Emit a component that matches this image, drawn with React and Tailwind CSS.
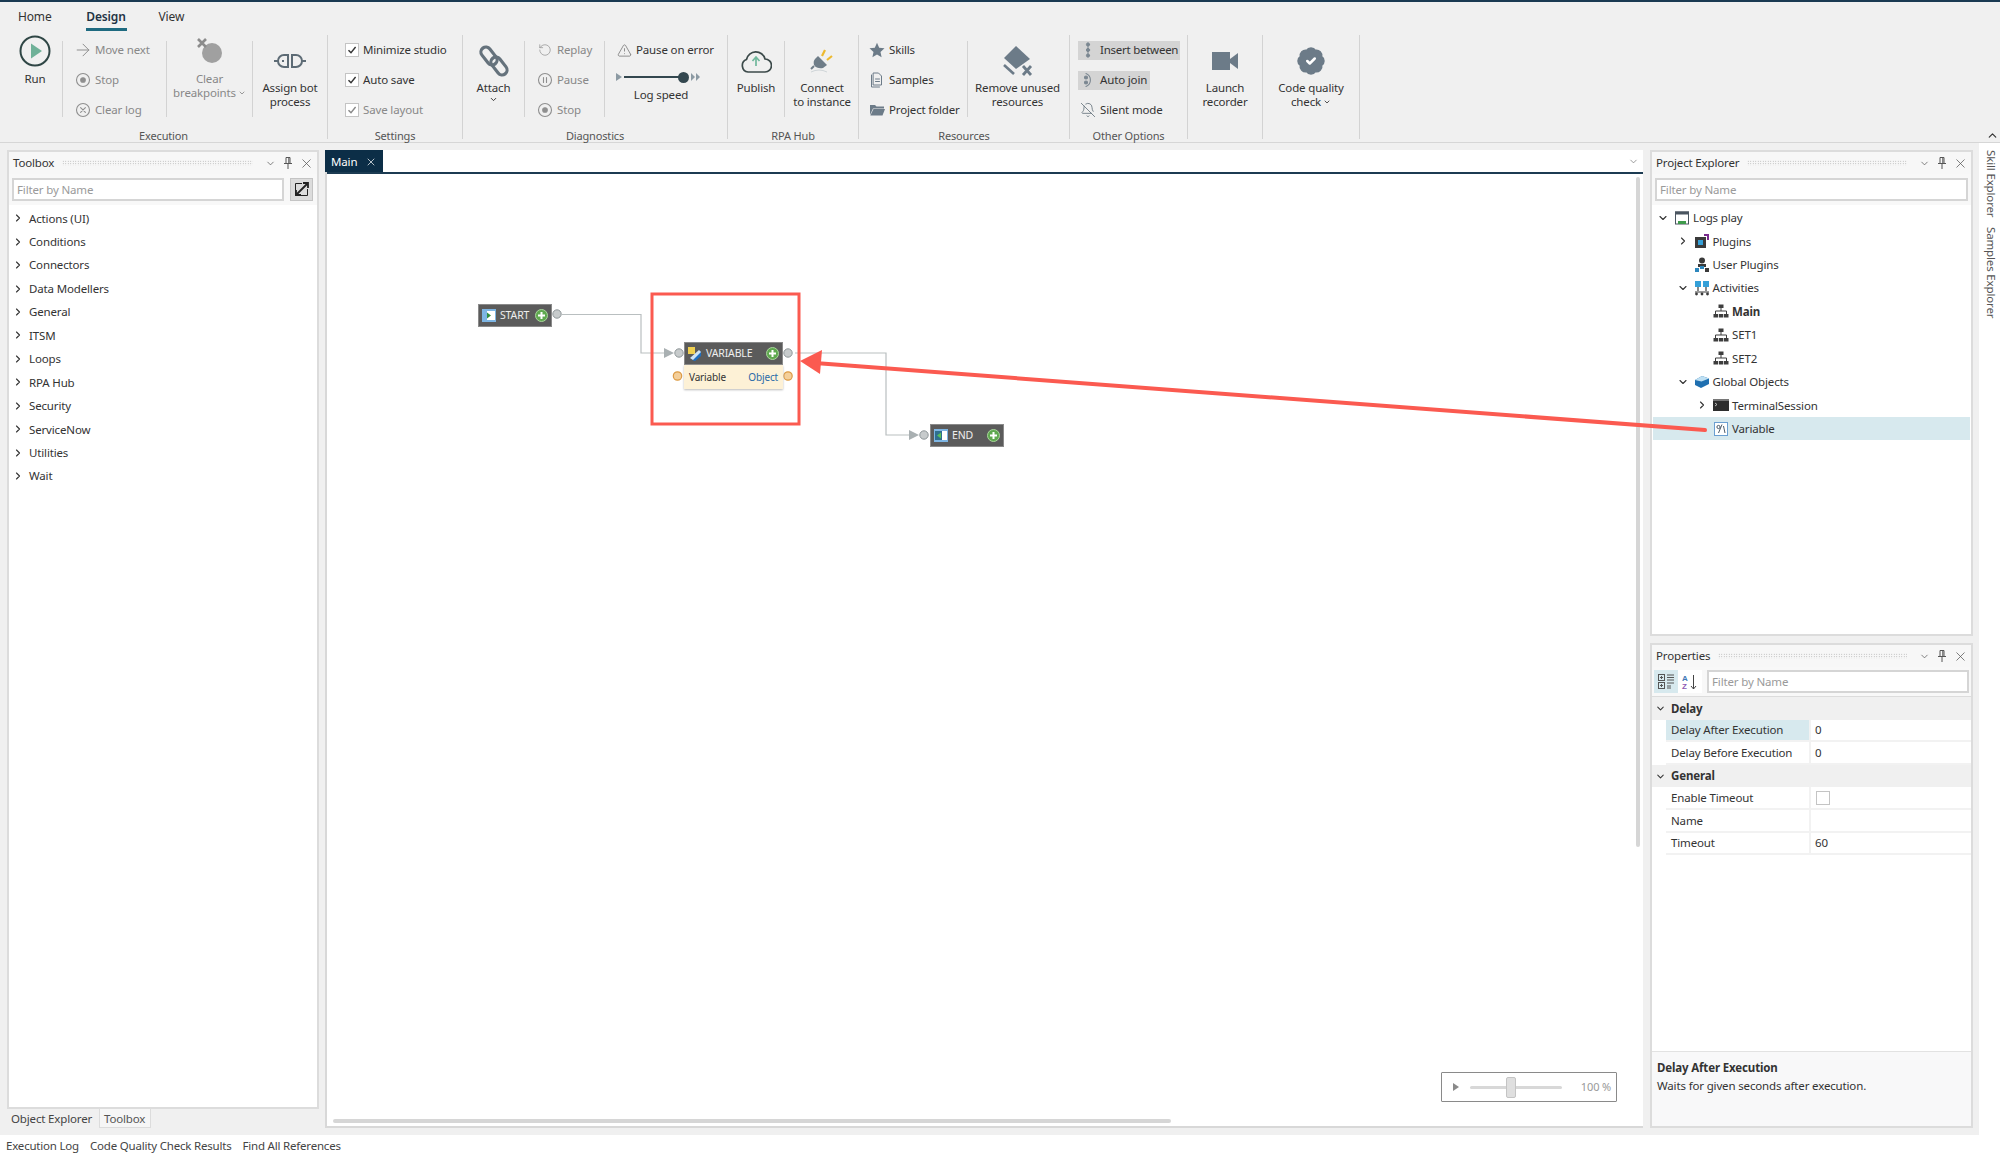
import React from 'react';
import { ArrowRight, ChevronDown, ChevronRight, ChevronUp, X, TriangleAlert, BellOff, RotateCcw, BadgeCheck } from 'lucide-react';

const Stroke = ({ s = 16, children, c = 'currentColor', w = 1.4 }) => (
  <svg width={s} height={s} viewBox="0 0 16 16" fill="none" stroke={c} strokeWidth={w} strokeLinecap="round" strokeLinejoin="round">
    {children}
  </svg>
);

// ribbon icons
const RunIcon = () => (
  <svg width="32" height="32" viewBox="0 0 32 32">
    <circle cx="16" cy="16" r="14.5" fill="none" stroke="#2f4645" strokeWidth="2" />
    <path d="M12 8.5 L23 16 L12 23.5 Z" fill="#6fb198" />
  </svg>
);
const StopIcon = () => (
  <Stroke c="#8f8f8f" w="1.1"><circle cx="8" cy="8" r="6.5" /><circle cx="8" cy="8" r="2.3" fill="#8f8f8f" /></Stroke>
);
const ClearIcon = () => (
  <Stroke c="#8f8f8f" w="1.1"><circle cx="8" cy="8" r="6.5" /><path d="M5.6 5.6l4.8 4.8M10.4 5.6l-4.8 4.8" /></Stroke>
);
const PauseIcon = () => (
  <Stroke c="#8f8f8f" w="1.1"><circle cx="8" cy="8" r="6.5" /><path d="M6.5 5.5v5M9.5 5.5v5" /></Stroke>
);
const BreakIcon = () => (
  <svg width="30" height="26" viewBox="0 0 30 26">
    <circle cx="17" cy="15" r="10" fill="#a0a0a0" />
    <path d="M3 1 L11 9 M11 1 L3 9" stroke="#8c8c8c" strokeWidth="2.6" />
  </svg>
);
const AssignIcon = () => (
  <svg width="32" height="16" viewBox="0 0 32 16" fill="none" stroke="#5d6b75" strokeWidth="2">
    <path d="M14 2 H10 A6 6 0 0 0 10 14 H14 Z" />
    <path d="M18 2 H22 A6 6 0 0 1 22 14 H18 Z" />
    <path d="M0 8 H4 M28 8 H32 M8 8h2" />
  </svg>
);
const AttachIcon = () => (
  <svg width="32" height="32" viewBox="0 0 32 32" fill="none" stroke="#65727c" strokeWidth="3.2">
    <rect x="1" y="6" width="20" height="10" rx="5" transform="rotate(52 11 11)" />
    <rect x="11" y="16" width="20" height="10" rx="5" transform="rotate(52 21 21)" />
  </svg>
);
const PublishIcon = () => (
  <svg width="32" height="26" viewBox="0 0 32 26" fill="none">
    <path d="M8 24 A6.5 6.5 0 0 1 6.5 11.5 A9.5 9.5 0 0 1 25 11 A6.5 6.5 0 0 1 25 24 Z" stroke="#3c4a4a" strokeWidth="1.7" />
    <path d="M16 18 V10 M12.5 13 L16 9 L19.5 13" stroke="#70b89c" strokeWidth="1.7" />
  </svg>
);
const ConnectIcon = () => (
  <svg width="26" height="26" viewBox="0 0 26 26">
    <path d="M9 8 L18 17 L14 20 Q8 21 5 17 Q4 13 6 11 Z" fill="#6f7d88" />
    <path d="M5 18 L2 21" stroke="#6f7d88" strokeWidth="2" />
    <path d="M13 8 L16 2 M18 12 L23 8" stroke="#edb92e" strokeWidth="2.2" />
    <path d="M2 24 Q10 20 18 24" stroke="#cfd5d8" strokeWidth="1" fill="none" />
  </svg>
);
const StarIcon = () => (
  <svg width="16" height="16" viewBox="0 0 16 16"><path d="M8 .8l2.2 4.9 5.3.6-4 3.6 1.1 5.3L8 12.5l-4.6 2.7 1.1-5.3-4-3.6 5.3-.6z" fill="#6c7b88" /></svg>
);
const SamplesIcon = () => (
  <Stroke c="#6c7b88" w="1"><path d="M4.5 1h5l3 3v9h-8z" /><path d="M2.5 3v12h8" /><path d="M6.5 7h4M6.5 9.5h4" /></Stroke>
);
const FolderIcon = () => (
  <svg width="16" height="16" viewBox="0 0 16 16"><path d="M1 3h5l1.5 1.5H15v2H4L1 13z" fill="#6c7b88" /><path d="M4.5 7H16l-2.5 6.5H1.3z" fill="#6c7b88" /></svg>
);
const RemoveIcon = () => (
  <svg width="32" height="32" viewBox="0 0 32 32">
    <path d="M14 1 L28 14 L14 24 L2 13 Z" fill="#6c7b88" />
    <path d="M2 20 L12 29" stroke="#6c7b88" strokeWidth="2.6" />
    <path d="M21 21 L29 30 M29 21 L21 30" stroke="#6c7b88" strokeWidth="2.8" />
  </svg>
);
const InsertIcon = () => (
  <Stroke c="#7b8791" w="1"><path d="M8 1v14" /><circle cx="8" cy="2.5" r="1.6" fill="#7b8791" /><circle cx="8" cy="8" r="1.6" fill="#7b8791" /><circle cx="8" cy="13.5" r="1.6" fill="#7b8791" /></Stroke>
);
const JoinIcon = () => (
  <Stroke c="#7b8791" w="1.1"><path d="M6 1.5 A7 7 0 0 1 6 14.5" /><circle cx="6" cy="5.5" r="1.5" fill="#7b8791" /><circle cx="6" cy="10.5" r="1.5" fill="#7b8791" /></Stroke>
);
const VideoIcon = () => (
  <svg width="26" height="18" viewBox="0 0 26 18"><rect width="18" height="18" fill="#6c7b88" /><path d="M18 7 L26 1 V17 L18 11 Z" fill="#6c7b88" /></svg>
);
const MiniSlider = () => (
  <div className="flex items-center h-[30px] pl-[13px]">
    <svg width="7" height="8" viewBox="0 0 7 8"><path d="M0 0l6 4-6 4z" fill="#8c9aa3" /></svg>
    <div className="w-[59px] h-[2px] bg-[#33474f] ml-[1px]" />
    <div className="w-[11px] h-[11px] rounded-full bg-[#33474f] -ml-[5px]" />
    <svg className="ml-[2px]" width="10" height="8" viewBox="0 0 10 8"><path d="M0 0l4 4-4 4zM5 0l4 4-4 4z" fill="#8c9aa3" /></svg>
  </div>
);

// tree icons
const Box = ({ children }) => <svg width="16" height="16" viewBox="0 0 16 16">{children}</svg>;
const ProjectIco = () => (
  <Box><rect x="1.5" y="2" width="13" height="12" fill="#fff" stroke="#4a5560" /><rect x="1" y="1.5" width="14" height="3" fill="#4a5560" /><rect x="4" y="11" width="8" height="3" fill="#3f9b4c" /></Box>
);
const PluginIco = () => (
  <Box><rect x="1" y="4" width="11" height="11" fill="#3a3a3a" /><rect x="4" y="7" width="5" height="5" fill="#35a0d8" /><path d="M10 1h5v6h-2V3h-3z" fill="#7a2b8e" /></Box>
);
const UserIco = () => (
  <Box><circle cx="8" cy="3.5" r="3" fill="#3a3a3a" /><rect x="4" y="7" width="8" height="3" fill="#3a3a3a" /><rect x="1" y="11" width="4" height="4" fill="#2d87bd" /><rect x="6" y="9" width="4" height="3" fill="#2d87bd" /><rect x="11" y="11" width="4" height="4" fill="#3a3a3a" /></Box>
);
const ActivitiesIco = () => (
  <Box><rect x="1" y="1" width="6" height="6" fill="#35a0d8" /><rect x="9" y="1" width="6" height="6" fill="#35a0d8" /><path d="M4 7v4M12 7v4M1 12h14" stroke="#3a3a3a" strokeWidth="1.2" /><circle cx="2.5" cy="14" r="1.4" fill="#3a3a3a" /><circle cx="8" cy="14" r="1.4" fill="#3a3a3a" /><circle cx="13.5" cy="14" r="1.4" fill="#3a3a3a" /></Box>
);
const FlowIco = () => (
  <Box><rect x="5.5" y="1.5" width="5" height="3.5" fill="#3e3e3e" /><path d="M8 5v3M2.5 11V8h11v3" stroke="#3e3e3e" fill="none" /><rect x="0.5" y="11" width="4.5" height="3.5" fill="#3e3e3e" /><rect x="5.8" y="11" width="4.5" height="3.5" fill="#3e3e3e" /><rect x="11" y="11" width="4.5" height="3.5" fill="#3e3e3e" /></Box>
);
const GlobalIco = () => (
  <Box><path d="M8 2 L15 4.5 V10 L7 14 L1 11 V6 Z" fill="#1f6fb0" /><path d="M8 2 L15 4.5 L7.5 7.5 L1 6 Z" fill="#bfe0f3" /></Box>
);
const TerminalIco = () => (
  <Box><rect y="2" width="16" height="12" fill="#2e2e2e" /><rect y="2" width="16" height="2" fill="#777" /><path d="M2 6l2 1.5L2 9" stroke="#ddd" fill="none" strokeWidth=".8" /></Box>
);
const VarIco = () => (
  <Box><rect x="1.5" y="1.5" width="13" height="13" fill="#fff" stroke="#6b9fd1" /><circle cx="5.5" cy="6" r="1.6" fill="none" stroke="#3a4a58" strokeWidth=".9" /><path d="M9 3.5 L5.5 12 M10.5 5 L12 12" stroke="#3a4a58" strokeWidth=".9" /></Box>
);

const Row = ({ icon, children, gray, pl = 'pl-0', gap = 'ml-[4px]' }) => (
  <div className={`flex items-center h-[30px] ${pl} ${gray ? 'text-[#888]' : 'text-[#333]'}`}>
    <div className="w-4 h-4 flex items-center justify-center shrink-0">{icon}</div>
    <span className={`${gap} whitespace-nowrap`}>{children}</span>
  </div>
);

const Large = ({ w, icon, lines, gray, iconH = 'h-[46px] pt-[6px]' }) => (
  <div className={`${w} shrink-0 flex flex-col items-center leading-[14px] ${gray ? 'text-[#888]' : 'text-[#333]'}`}>
    <div className={`${iconH} w-full flex items-center justify-center shrink-0`}>{icon}</div>
    {lines.map((l, i) => <div key={i} className="whitespace-nowrap flex items-center">{l}</div>)}
  </div>
);

const Sep = () => <div className="w-px h-[76px] mt-[6px] bg-[#d3d3d3] shrink-0" />;

const Check = ({ label, gray }) => (
  <div className={`flex items-center h-[30px] ${gray ? 'text-[#888]' : 'text-[#333]'}`}>
    <div className={`w-[14px] h-[14px] bg-white border border-[#c4c4c4] flex items-center justify-center ${gray ? 'bg-[#f0f0f0]' : ''}`}>
      <svg width="10" height="10" viewBox="0 0 10 10" fill="none" stroke={gray ? '#888' : '#333'} strokeWidth="1.4"><path d="M1.5 5.2 L4 7.8 L8.6 2" /></svg>
    </div>
    <span className="ml-[4px] whitespace-nowrap">{label}</span>
  </div>
);

const Group = ({ w, label, children }) => (
  <div className={`${w} h-[104px] shrink-0 border-r border-[#d3d3d3] flex flex-col`}>
    <div className="h-[94px] shrink-0 flex items-start">{children}</div>
    <div className="h-[14px] shrink-0 leading-[14px] text-center text-[#555] text-[11px]">{label}</div>
  </div>
);

const Caret = () => <ChevronDown size={8} strokeWidth={2.5} className="ml-[2px]" />;

const Ribbon = () => (
  <div className="h-[143px] bg-[#f0f0f0] border-b border-[#d6d6d6] border-t-2 border-t-[#1a3a52] shrink-0 relative">
    <div className="h-[33px] flex text-[#333] text-[12px]">
      <div className="ml-[18px] mt-[8px] leading-[14px]">Home</div>
      <div className="ml-[34px] mt-[8px] h-[21px] w-[41px] leading-[14px] border-b-[3px] border-[#1e6a80] font-semibold text-[#1f3344] text-center">Design</div>
      <div className="ml-[32px] mt-[8px] leading-[14px]">View</div>
    </div>
    <div className="flex items-start">
      <Group w="w-[328px]" label="Execution">
        <Large w="w-[62px] pl-[8px]" iconH="h-[37px]" icon={<div className="-mt-[5px]"><RunIcon /></div>} lines={['Run']} />
        <Sep />
        <div className="w-[104px] pl-[12px]">
          <Row gray icon={<ArrowRight size={20} strokeWidth={1.2} color="#8f8f8f" className="shrink-0" />}>Move next</Row>
          <Row gray icon={<StopIcon />}>Stop</Row>
          <Row gray icon={<ClearIcon />}>Clear log</Row>
        </div>
        <Sep />
        <Large w="w-[85px]" gray iconH="h-[37px]" icon={<div className="-mt-[6px]"><BreakIcon /></div>} lines={['Clear', <>breakpoints<Caret /></>]} />
        <Sep />
        <Large w="w-[74px]" icon={<AssignIcon />} lines={['Assign bot', 'process']} />
      </Group>
      <Group w="w-[135px]" label="Settings">
        <div className="pl-[17px]">
          <Check label="Minimize studio" />
          <Check label="Auto save" />
          <Check gray label="Save layout" />
        </div>
      </Group>
      <Group w="w-[265px]" label="Diagnostics">
        <Large w="w-[61px]" icon={<AttachIcon />} lines={['Attach', <ChevronDown key="c" size={9} strokeWidth={2.5} />]} />
        <Sep />
        <div className="w-[79px] pl-[12px]">
          <Row gray icon={<RotateCcw size={14} strokeWidth={1.2} color="#8f8f8f" />}>Replay</Row>
          <Row gray icon={<PauseIcon />}>Pause</Row>
          <Row gray icon={<StopIcon />}>Stop</Row>
        </div>
        <Sep />
        <div className="w-[122px] pl-[11px]">
          <Row icon={<TriangleAlert size={15} strokeWidth={1} color="#555" />}>Pause on error</Row>
          <div className="-ml-[13px] -mt-[3px]"><MiniSlider /></div>
          <div className="text-center w-[98px] -mt-[4px] leading-[14px] -ml-[4px] text-[#333]">Log speed</div>
        </div>
      </Group>
      <Group w="w-[131px]" label="RPA Hub">
        <Large w="w-[56px]" icon={<PublishIcon />} lines={['Publish']} />
        <Sep />
        <Large w="w-[74px]" icon={<ConnectIcon />} lines={['Connect', 'to instance']} />
      </Group>
      <Group w="w-[211px]" label="Resources">
        <div className="w-[108px] pl-[10px]">
          <Row icon={<StarIcon />}>Skills</Row>
          <Row icon={<SamplesIcon />}>Samples</Row>
          <Row icon={<FolderIcon />}>Project folder</Row>
        </div>
        <Sep />
        <Large w="w-[99px]" icon={<RemoveIcon />} lines={['Remove unused', 'resources']} />
      </Group>
      <Group w="w-[118px]" label="Other Options">
        <div className="pl-[8px] w-full">
          <div className="h-[30px] flex items-center">
            <div className="h-[19px] w-[102px] bg-[#d4d4d4] flex items-center pl-[2px] text-[#333]"><InsertIcon /><span className="ml-[4px] whitespace-nowrap tracking-[-0.25px]">Insert between</span></div>
          </div>
          <div className="h-[30px] flex items-center">
            <div className="h-[19px] w-[72px] bg-[#d4d4d4] flex items-center pl-[2px] text-[#333]"><JoinIcon /><span className="ml-[4px] whitespace-nowrap">Auto join</span></div>
          </div>
          <div className="h-[30px] flex items-center pl-[2px] text-[#333]"><BellOff size={16} strokeWidth={1.2} color="#5d6b75" /><span className="ml-[4px] whitespace-nowrap">Silent mode</span></div>
        </div>
      </Group>
      <Group w="w-[75px]">
        <Large w="w-full" icon={<VideoIcon />} lines={['Launch', 'recorder']} />
      </Group>
      <Group w="w-[97px]">
        <Large
          w="w-full"
          icon={<BadgeCheck size={30} strokeWidth={2} fill="#6c7b88" color="#fff" className="[&>path:first-child]:stroke-[#6c7b88]" />}
          lines={['Code quality', <>check<Caret /></>]}
        />
      </Group>
    </div>
    <ChevronUp size={13} strokeWidth={2.2} color="#333" className="absolute right-[1px] bottom-0" />
  </div>
);

const Pin = () => (
  <svg width="10" height="12" viewBox="0 0 10 12" fill="none" stroke="#555" strokeWidth="1"><path d="M3 .5h4v6H3zM1 6.5h8M5 6.5V12M5.8 1v5" /></svg>
);

const PanelHeader = ({ title }) => (
  <div className="h-[22px] shrink-0 bg-[#f7f7f7] flex items-center pl-[4px] pr-[3px] text-[#333]">
    <span className="whitespace-nowrap">{title}</span>
    <div className="flex-1 h-[6px] mx-[8px] bg-[radial-gradient(#a8a8a8_0.7px,transparent_0.8px)] bg-[length:2.5px_2.5px]" />
    <ChevronDown size={11} strokeWidth={1.6} color="#555" className="ml-[4px]" />
    <div className="ml-[7px] mr-[6px]"><Pin /></div>
    <X size={15} strokeWidth={1.2} color="#555" />
  </div>
);

const FilterBox = ({ className }) => (
  <div className={`h-[23px] bg-white border-2 border-[#d5d5d5] text-[#9a9a9a] pl-[3px] leading-[19px] ${className}`}>Filter by Name</div>
);

const TreeRow = ({ level = 0, chev, icon, label, bold, selected }) => (
  <div className={`h-[23.45px] flex items-center mx-[1px] ${selected ? 'bg-[#d7e9ee]' : ''}`}>
    <div className="pl-[2px]" style={{ marginLeft: level * 19.5 }} />
    <div className="w-4 flex justify-center text-[#333]">
      {chev === 'down' && <ChevronDown size={12} strokeWidth={2.2} />}
      {chev === 'right' && <ChevronRight size={12} strokeWidth={2.2} />}
    </div>
    <div className="w-4 h-4 ml-[3px] shrink-0">{icon}</div>
    <span className={`ml-[3px] text-[#333] whitespace-nowrap ${bold ? 'font-bold' : ''}`}>{label}</span>
  </div>
);

const toolbox = ['Actions (UI)', 'Conditions', 'Connectors', 'Data Modellers', 'General', 'ITSM', 'Loops', 'RPA Hub', 'Security', 'ServiceNow', 'Utilities', 'Wait'];

const LeftColumn = () => (
  <div className="w-[312px] ml-[7px] shrink-0 flex flex-col">
    <div className="h-[959px] border-2 border-[#dcdcdc] bg-white flex flex-col">
      <PanelHeader title="Toolbox" />
      <div className="h-[31px] shrink-0 bg-[#f8f8f8] pt-[4px] pl-[3px] pr-[4px] flex">
        <FilterBox className="flex-1" />
        <div className="w-[23px] h-[23px] ml-[6px] bg-[#dcdcdc] border border-[#c4c4c4] flex items-center justify-center">
          <svg width="17" height="17" viewBox="0 0 17 17" fill="none" stroke="#222" strokeWidth="1.8">
            <path d="M9 2.5H2.5v12h12V8" strokeWidth="1" />
            <path d="M3 14 L15 2 M10 2h5v5 M3 9v5h5" />
          </svg>
        </div>
      </div>
      <div className="pt-[1.5px]">
        {toolbox.map((t) => (
          <div key={t} className="h-[23.45px] flex items-center pl-[1px] text-[#333]">
            <div className="w-4 flex justify-center"><ChevronRight size={12} strokeWidth={2.2} /></div>
            <span className="ml-[3px]">{t}</span>
          </div>
        ))}
      </div>
    </div>
    <div className="flex h-[19px] text-[#444]">
      <div className="w-[92px] pl-[4px] leading-[20px]">Object Explorer</div>
      <div className="w-[52px] pl-[4px] leading-[19px] bg-[#f6f6f6] border-x border-b border-[#dcdcdc] text-[#555]">Toolbox</div>
    </div>
  </div>
);

const NodeHeader = ({ icon, label, w = 'w-[74px]', labelW }) => (
  <div className={`${w} h-[23px] bg-[#5b5b5b] border border-[#8a8a8a] flex items-center pl-[3px] text-white/90 text-[10.5px]`}>
    {icon}
    <span className={`ml-[4px] ${labelW}`}>{label}</span>
    <div className="ml-auto mr-[3px] w-[13px] h-[13px] rounded-full bg-[#5fa84f] border border-[#a9d69c] flex items-center justify-center">
      <svg width="9" height="9" viewBox="0 0 9 9" stroke="#fff" strokeWidth="2"><path d="M4.5 1v7M1 4.5h7" /></svg>
    </div>
  </div>
);

const StartIco = () => (
  <svg width="14" height="13" viewBox="0 0 14 13"><rect width="14" height="13" fill="#7db5e3" /><rect x="5" y="2" width="8" height="9" fill="#fff" /><path d="M5 3.5 L9 6.5 L5 9.5 Z" fill="#2f8f3f" /></svg>
);
const EndIco = () => (
  <svg width="14" height="13" viewBox="0 0 14 13"><rect width="14" height="13" fill="#7db5e3" /><rect x="1" y="2" width="7" height="9" fill="#2f6f8f" /><rect x="8" y="2" width="5" height="9" fill="#fff" /><path d="M7 3.5 L3 6.5 L7 9.5 Z" fill="#58c05a" /></svg>
);
const VarNodeIco = () => (
  <svg width="14" height="14" viewBox="0 0 14 14"><path d="M4 13 L13 4 L13 9 L7 14 Z" fill="#1f6fc0" /><rect x="0" y="0" width="7" height="7" fill="#f0d050" /><path d="M2 11 L11 3 L13 5 L5 13 Z" fill="#cfe4f6" /></svg>
);

const Canvas = () => (
  <div className="relative flex-1 bg-white">
    <svg className="absolute inset-0 w-full h-full" fill="none">
      <g transform="translate(-327 -174)">
        <path d="M562 314.5 H641 V353 H665" stroke="#b9bfc0" strokeWidth="1.2" />
        <path d="M795 353 H886 V435 H910" stroke="#b9bfc0" strokeWidth="1.2" />
        <path d="M664 348 L674 353 L664 358 Z" fill="#a9b0b2" />
        <path d="M909 430 L919 435 L909 440 Z" fill="#a9b0b2" />
        {[[557, 314], [679, 353], [788, 353], [924, 435]].map(([x, y]) => (
          <circle key={x} cx={x} cy={y} r="4.2" fill="#c7cbcc" stroke="#8f9799" />
        ))}
        {[[677.5, 376], [788, 376]].map(([x, y]) => (
          <circle key={x} cx={x} cy={y} r="4.2" fill="#f4cf9a" stroke="#dc9b45" strokeWidth="1.2" />
        ))}
      </g>
    </svg>
    <div className="absolute left-[151px] top-[130px]"><NodeHeader icon={<StartIco />} label="START" /></div>
    <div className="absolute left-[357px] top-[168px] w-[99px]">
      <NodeHeader w="w-[99px]" icon={<VarNodeIco />} label="VARIABLE" />
      <div className="h-[24px] bg-[#fdf1d6] flex items-center justify-between px-[5px] text-[10px] shadow-[0_1px_2px_#bbb]">
        <span className="text-[#333]">Variable</span>
        <span className="text-[#2a6aa8]">Object</span>
      </div>
    </div>
    <div className="absolute left-[603px] top-[250px]"><NodeHeader icon={<EndIco />} label="END" /></div>

    <div className="absolute right-[3px] top-[3px] w-[4px] h-[670px] bg-[#d6d6d6] rounded-full" />
    <div className="absolute left-[6px] bottom-[3px] w-[838px] h-[4px] bg-[#d6d6d6] rounded-full" />

    <div className="absolute left-[1114px] top-[898px] w-[176px] h-[30px] bg-white border border-[#8a8a8a] rounded-[1px] flex items-center">
      <svg className="ml-[11px]" width="6" height="8" viewBox="0 0 6 8"><path d="M0 0l6 4-6 4z" fill="#8a8a8a" /></svg>
      <div className="relative w-[92px] h-[3px] ml-[11px] bg-[#d8d8d8] rounded-full">
        <div className="absolute left-[36px] -top-[9px] w-[10px] h-[21px] bg-[#dfdfdf] border border-[#c4c4c4] rounded-[2px]" />
      </div>
      <span className="ml-auto mr-[5px] text-[#999] text-[11px]">100 %</span>
    </div>
  </div>
);

const CenterColumn = () => (
  <div className="w-[1318px] ml-[6px] shrink-0 h-[978px] flex flex-col bg-white border-l-2 border-b-2 border-[#d8d8d8]">
    <div className="h-[22px] shrink-0 flex items-center bg-white">
      <div className="h-[22px] w-[58px] -ml-[2px] pt-[1px] bg-[#0c2e47] text-white flex items-center pl-[6px]">
        Main
        <X size={12} strokeWidth={1.4} className="ml-[8px]" />
      </div>
      <ChevronDown size={11} strokeWidth={1.6} color="#777" className="ml-auto mr-[4px]" />
    </div>
    <div className="h-[2px] shrink-0 bg-[#1c3b52]" />
    <Canvas />
  </div>
);

const PropRow = ({ name, value, active, check }) => (
  <div className="h-[22.6px] flex border-b-2 border-[#f2f2f2] ml-[14px]">
    <div className={`w-[145px] pl-[5px] flex items-center border-r-2 border-[#f2f2f2] text-[#333] ${active ? 'bg-[#d7e9ee]' : ''}`}>{name}</div>
    <div className="pl-[4px] flex items-center text-[#333]">
      {check ? <div className="w-[14px] h-[14px] ml-[1px] border border-[#c4c4c4] bg-white" /> : value}
    </div>
  </div>
);

const PropHeader = ({ label }) => (
  <div className="h-[22.6px] bg-[#f0f0f0] flex items-center text-[#333]">
    <ChevronDown size={11} strokeWidth={2.2} className="ml-[3px]" />
    <span className="ml-[5px] font-bold">{label}</span>
  </div>
);

const RightColumn = () => (
  <div className="w-[323px] ml-[7px] shrink-0 flex flex-col gap-[7px]">
    <div className="h-[486px] border-2 border-[#dcdcdc] bg-white flex flex-col">
      <PanelHeader title="Project Explorer" />
      <div className="h-[31px] shrink-0 bg-[#f8f8f8] pt-[4px] px-[3px]">
        <FilterBox />
      </div>
      <div className="pt-[1px]">
        <TreeRow chev="down" icon={<ProjectIco />} label="Logs play" />
        <TreeRow level={1} chev="right" icon={<PluginIco />} label="Plugins" />
        <TreeRow level={1} icon={<UserIco />} label="User Plugins" />
        <TreeRow level={1} chev="down" icon={<ActivitiesIco />} label="Activities" />
        <TreeRow level={2} icon={<FlowIco />} label="Main" bold />
        <TreeRow level={2} icon={<FlowIco />} label="SET1" />
        <TreeRow level={2} icon={<FlowIco />} label="SET2" />
        <TreeRow level={1} chev="down" icon={<GlobalIco />} label="Global Objects" />
        <TreeRow level={2} chev="right" icon={<TerminalIco />} label="TerminalSession" />
        <TreeRow level={2} icon={<VarIco />} label="Variable" selected />
      </div>
    </div>
    <div className="h-[485px] border-2 border-[#dcdcdc] bg-white flex flex-col">
      <PanelHeader title="Properties" />
      <div className="h-[30px] shrink-0 bg-[#f8f8f8] pt-[3px] pl-[2px] pr-[2px] flex border-b border-[#dcdcdc]">
        <div className="w-[24px] h-[23px] bg-[#d7e9ee] flex items-center justify-center">
          <svg width="17" height="17" viewBox="0 0 17 17" fill="none" stroke="#555"><rect x=".5" y="1.5" width="6" height="6" /><rect x=".5" y="9.5" width="6" height="6" /><path d="M2 4.5h3M3.5 3v3M2 12.5h3M3.5 11v3M9 2h7M9 4.5h7M9 7h7M9 10h7M9 13h4M9 15h4" /></svg>
        </div>
        <div className="w-[24px] h-[23px] bg-white flex items-center justify-center">
          <svg width="18" height="18" viewBox="0 0 18 18" fill="none"><text x="1" y="8" fontSize="8" fontFamily="Liberation Sans" fontWeight="700" fill="#3f78b5">A</text><text x="1" y="16" fontSize="8" fontFamily="Liberation Sans" fontWeight="700" fill="#8e5ab5">Z</text><path d="M12.5 2v14M10 13l2.5 3 2.5-3" stroke="#444" /></svg>
        </div>
        <FilterBox className="flex-1 ml-[5px]" />
      </div>
      <PropHeader label="Delay" />
      <PropRow name="Delay After Execution" value="0" active />
      <PropRow name="Delay Before Execution" value="0" />
      <PropHeader label="General" />
      <PropRow name="Enable Timeout" check />
      <PropRow name="Name" value="" />
      <PropRow name="Timeout" value="60" />
      <div className="flex-1" />
      <div className="h-[75px] shrink-0 bg-[#f8f8f9] border-t border-[#e2e2e2] pl-[5px] pt-[7px] leading-[18px] text-[#333]">
        <div className="font-bold">Delay After Execution</div>
        <div>Waits for given seconds after execution.</div>
      </div>
    </div>
  </div>
);

export default function App() {
  return (
    <div className="relative w-[2000px] h-[1160px] overflow-hidden bg-white flex flex-col text-[11.5px] tracking-[-0.15px] font-['Noto_Sans','Open_Sans',sans-serif]">
      <Ribbon />
      <div className="flex h-[992px] shrink-0">
        <div className="w-[1979px] shrink-0 bg-[#f0f0f0] flex pt-[7px]">
          <LeftColumn />
          <CenterColumn />
          <RightColumn />
        </div>
        <div className="flex-1 bg-white pt-[7px] text-[#555] flex gap-[10px] [writing-mode:vertical-rl]">
          <span>Skill Explorer</span>
          <span>Samples Explorer</span>
        </div>
      </div>
      <div className="flex-1 bg-white flex items-start gap-[11px] pl-[6px] pt-[2px] text-[#444] tracking-[-0.2px]">
        <span>Execution Log</span>
        <span>Code Quality Check Results</span>
        <span>Find All References</span>
      </div>

      {/* red annotation drawn over the screen */}
      <svg className="absolute inset-0 pointer-events-none" width="2000" height="1160" fill="none">
        <rect x="652" y="294" width="147" height="130" stroke="#fb5a50" strokeWidth="3" />
        <path d="M1705 430 L815 363" stroke="#fb5a50" strokeWidth="4" strokeLinecap="round" />
        <path d="M800 361 L822 350 L820 374 Z" fill="#fb5a50" />
      </svg>
    </div>
  );
}
